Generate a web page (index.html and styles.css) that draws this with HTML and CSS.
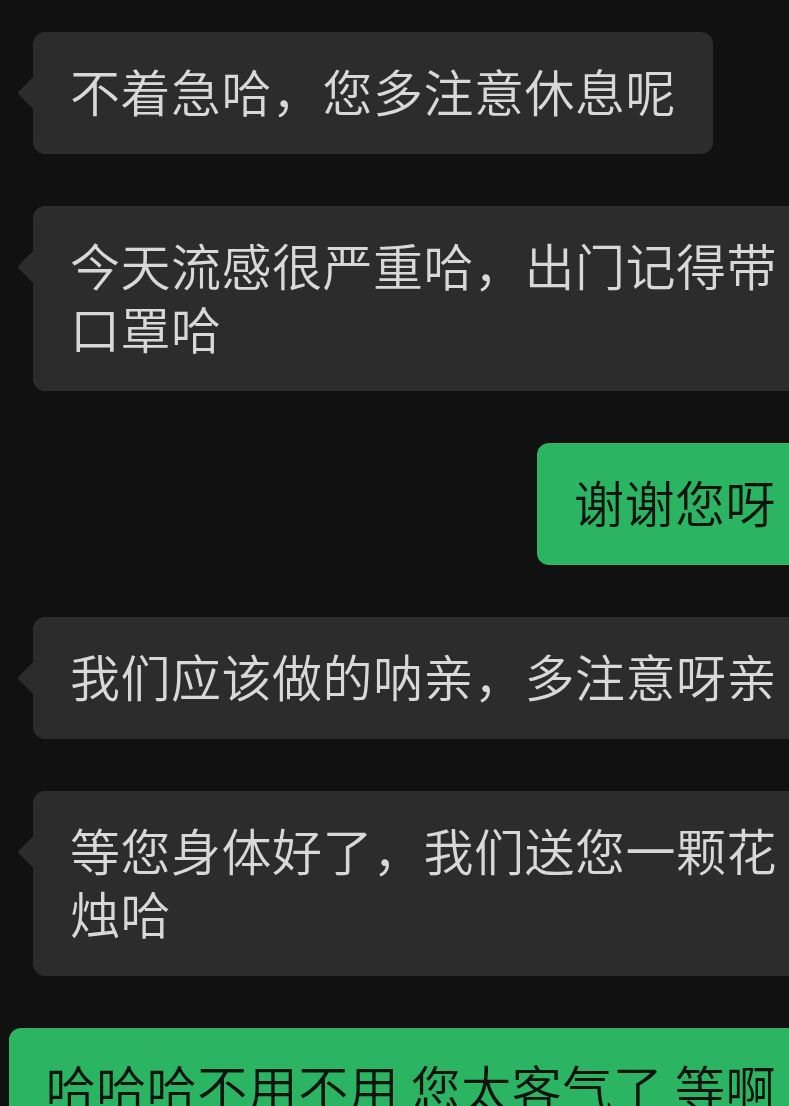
FILE: index.html
```html
<!DOCTYPE html>
<html lang="zh-CN">
<head>
<meta charset="utf-8">
<title>Chat</title>
<link rel="stylesheet" href="styles.css">
</head>
<body>
<div class="chat">
  <div class="row recv"><div class="bubble">不着急哈，您多注意休息呢</div></div>
  <div class="row recv"><div class="bubble">今天流感很严重哈，出门记得带口罩哈</div></div>
  <div class="row sent"><div class="bubble">谢谢您呀</div></div>
  <div class="row recv"><div class="bubble">我们应该做的呐亲，多注意呀亲</div></div>
  <div class="row recv"><div class="bubble">等您身体好了，我们送您一颗花烛哈</div></div>
  <div class="row sent"><div class="bubble">哈哈哈不用不用 您太客气了 等啊</div></div>
</div>
</body>
</html>
```

FILE: styles.css
```css
html, body {
  margin: 0;
  padding: 0;
  background: #111111;
  overflow: hidden;
  height: 100%;
}

.chat {
  width: 860px;
  padding-top: 32px;
  display: flex;
  flex-direction: column;
  gap: 52px;
  font-family: "Noto Sans CJK SC", "Noto Sans", sans-serif;
  font-size: 50px;
  font-weight: 350;
  letter-spacing: 0.5px;
  line-height: 63px;
}

.row {
  display: flex;
}

.recv {
  justify-content: flex-start;
  padding-left: 33px;
}

.sent {
  justify-content: flex-end;
  padding-right: 47px;
}

.bubble {
  position: relative;
  box-sizing: border-box;
  max-width: 808px;
  padding: 27px 37px 32px;
  border-radius: 12px;
}

.recv .bubble {
  background: #2c2c2c;
  color: #d8d8d8;
}

.sent .bubble {
  background: #2bb563;
  color: #0d130f;
}

.bubble::before {
  content: "";
  position: absolute;
  top: 49px;
  width: 24px;
  height: 24px;
  border-radius: 3px;
  transform: rotate(45deg);
}

.recv .bubble::before {
  left: -11px;
  background: #2c2c2c;
}

.sent .bubble::before {
  right: -11px;
  background: #2bb563;
}
```
